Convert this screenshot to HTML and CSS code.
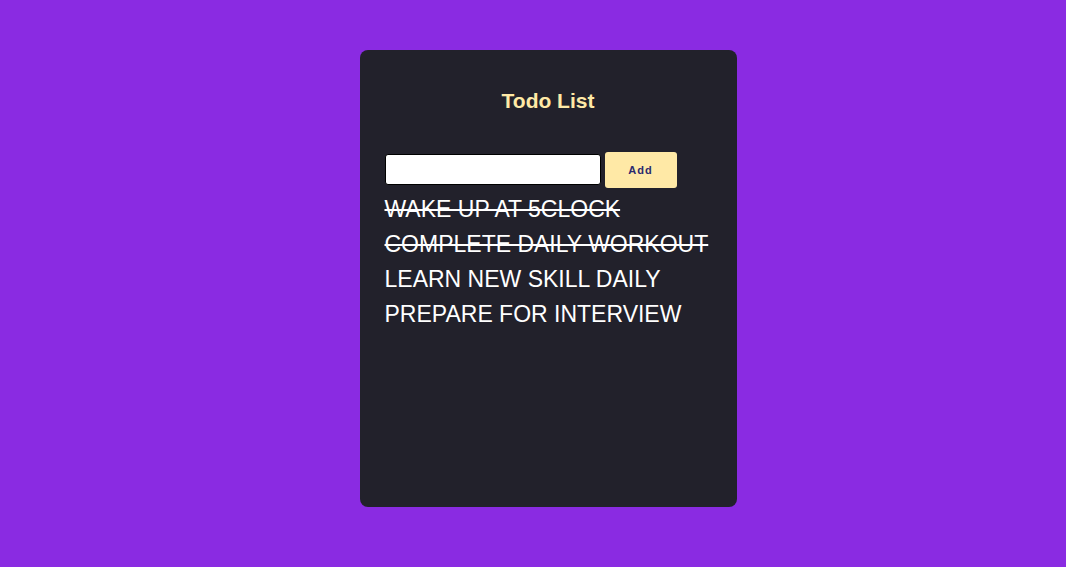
FILE: index.html
```html
<!DOCTYPE html>
<html>
<head>
<meta charset="utf-8">
<link rel="stylesheet" href="styles.css">
</head>
<body>
<div class="card">
  <h1 class="title">Todo List</h1>
  <div class="form">
    <input class="field" type="text">
    <button class="add">Add</button>
  </div>
  <ul class="list">
    <li class="item done">WAKE UP AT 5CLOCK</li>
    <li class="item done">COMPLETE DAILY WORKOUT</li>
    <li class="item">LEARN NEW SKILL DAILY</li>
    <li class="item">PREPARE FOR INTERVIEW</li>
  </ul>
</div>
</body>
</html>
```
FILE: styles.css
```css
html, body {
  margin: 0;
  padding: 0;
}
body {
  background: #8a2be2;
  font-family: "Liberation Sans", Arial, sans-serif;
  min-height: 567px;
  display: flex;
  justify-content: center;
  align-items: flex-start;
  padding-top: 50px;
  box-sizing: border-box;
}
.card {
  width: 377px;
  height: 457px;
  box-sizing: border-box;
  background: #22212b;
  border-radius: 8px;
  padding: 0 25px;
  margin-left: 30px;
}
.title {
  color: #ffe9a6;
  font-size: 21px;
  font-weight: bold;
  text-align: center;
  margin: 39px 0 0;
  line-height: 23px;
}
.form {
  display: flex;
  align-items: flex-start;
  gap: 4px;
  margin-top: 40px;
}
.field {
  width: 216px;
  height: 31px;
  box-sizing: border-box;
  border: 1px solid #000;
  border-radius: 3px;
  background: #fff;
  margin: 2px 0 0;
  padding: 0 4px;
}
.add {
  width: 72px;
  height: 36px;
  border: none;
  border-radius: 3px;
  background: #ffe9a6;
  color: #2b2a6e;
  font-family: "Liberation Sans", Arial, sans-serif;
  font-size: 11px;
  font-weight: bold;
  letter-spacing: 1px;
  padding: 0;
}
.list {
  list-style: none;
  margin: 4px 0 0;
  padding: 0;
}
.item {
  color: #fff;
  font-size: 23px;
  line-height: 35px;
  white-space: nowrap;
}
.done {
  text-decoration: line-through;
}
```
